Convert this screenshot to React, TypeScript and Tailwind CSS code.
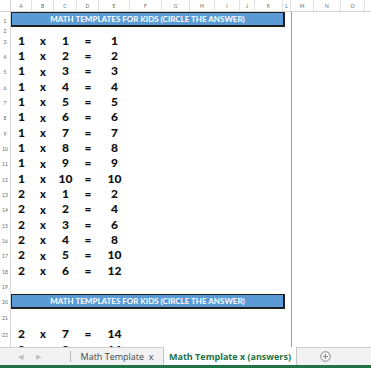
import type { ReactNode } from "react";

const COLS = [
  { k: "A", w: 21 },
  { k: "B", w: 22 },
  { k: "C", w: 23 },
  { k: "D", w: 22 },
  { k: "E", w: 31 },
  { k: "F", w: 32 },
  { k: "G", w: 28 },
  { k: "H", w: 25 },
  { k: "I", w: 25 },
  { k: "J", w: 15 },
  { k: "K", w: 28 },
  { k: "L", w: 8 },
  { k: "M", w: 23 },
  { k: "N", w: 27 },
  { k: "O", w: 24 },
];

const TITLE = "MATH TEMPLATES FOR KIDS (CIRCLE THE ANSWER)";

const ROWS_TOP = [
  ...Array.from({ length: 10 }, (_, i) => [1, i + 1]),
  ...Array.from({ length: 6 }, (_, i) => [2, i + 1]),
];

function Row({ num, h, children }: { num: number; h: number; children?: ReactNode }) {
  return (
    <div className="flex shrink-0" style={{ height: h }}>
      <div className="flex w-[11px] shrink-0 items-center justify-center border-r border-[#d6d6d6] pt-[3px] text-[5px] leading-none text-[#666]">
        {num}
      </div>
      <div className="flex w-[281px] shrink-0 items-center border-r border-[#9c9c9c]">{children}</div>
      <div className="flex-1" />
    </div>
  );
}

function Equation({ a, b }: { a: number; b: number }) {
  return (
    <div className="flex h-full items-center font-black text-[12px] leading-none text-[#111]">
      <span className="w-[21px] text-center">{a}</span>
      <span className="w-[22px] text-center text-[11px]">x</span>
      <span className="w-[23px] text-center">{b}</span>
      <span className="w-[22px] text-center">=</span>
      <span className="w-[31px] text-center">{a * b}</span>
    </div>
  );
}

function TitleBar() {
  return (
    <div className="flex h-full w-[274px] items-center justify-center border border-r-2 border-b-2 border-[#1f1f1f] bg-[#5b9bd5] text-[8px] font-bold leading-none text-white">
      {TITLE}
    </div>
  );
}

export default function App() {
  return (
    <div
      className="flex h-[368px] w-[371px] flex-col overflow-hidden bg-white"
      style={{ fontFamily: "Lato, 'Open Sans', sans-serif" }}
    >
      {/* column headers */}
      <div className="flex h-[12px] shrink-0 border-b border-[#d4d4d4] text-[5px] leading-none text-[#666]">
        <div className="w-[11px] shrink-0 border-r border-[#d4d4d4]" />
        {COLS.map((c) => (
          <div
            key={c.k}
            className="flex shrink-0 items-center justify-center border-r border-[#e2e2e2] pt-[2px]"
            style={{ width: c.w }}
          >
            {c.k}
          </div>
        ))}
        <div className="flex-1" />
      </div>

      {/* sheet body */}
      <div className="flex flex-1 flex-col overflow-hidden">
        <Row num={1} h={15}>
          <TitleBar />
        </Row>
        <Row num={2} h={6} />
        {ROWS_TOP.map(([a, b], i) => (
          <Row key={i} num={i + 3} h={15.33}>
            <Equation a={a} b={b} />
          </Row>
        ))}
        <Row num={19} h={15.7} />
        <Row num={20} h={15}>
          <TitleBar />
        </Row>
        <Row num={21} h={17} />
        <Row num={22} h={16}>
          <Equation a={2} b={7} />
        </Row>
        <Row num={23} h={16}>
          <Equation a={2} b={8} />
        </Row>
      </div>

      {/* sheet tabs */}
      <div
        className="relative flex h-[21px] shrink-0 border-t border-[#cfcfcf] border-b-[3px] border-b-[#217346] bg-[#f2f2f2] text-[9px] leading-none"
        style={{ fontFamily: "'Open Sans', sans-serif" }}
      >
        <div className="flex w-[70px] items-center text-[7px] text-[#bdbdbd]">
          <span className="ml-[18px]">◀</span>
          <span className="ml-[13px]">▶</span>
        </div>
        <div className="my-[3px] border-l border-[#b8b8b8]" />
        <div className="flex w-[92px] items-center justify-center text-[#444]">Math Template&nbsp; x</div>
        <div className="-mt-px flex w-[134px] items-center justify-center border-x border-[#c6c6c6] bg-white font-bold text-[#217346]">
          Math Template x (answers)
        </div>
        <div className="flex flex-1 items-center pl-[23px]">
          <svg width="11" height="11" viewBox="0 0 11 11" fill="none" stroke="#8a8a8a" strokeWidth="1">
            <circle cx="5.5" cy="5.5" r="4.8" />
            <path d="M5.5 3v5M3 5.5h5" />
          </svg>
        </div>
      </div>
    </div>
  );
}
